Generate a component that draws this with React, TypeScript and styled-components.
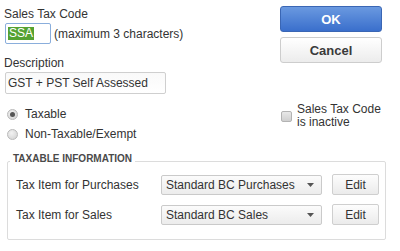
import styled, { createGlobalStyle } from "styled-components";

const GlobalStyle = createGlobalStyle`
  html, body {
    margin: 0;
    padding: 0;
    background: #ffffff;
  }
  body {
    font-family: "Liberation Sans", Arial, sans-serif;
    font-size: 12px;
    color: #333333;
  }
`;

const Dialog = styled.div`
  width: 400px;
  height: 251px;
  background: #ffffff;
  box-sizing: border-box;
  display: flex;
  flex-direction: column;
`;

const Top = styled.div`
  display: flex;
`;

const LeftColumn = styled.div`
  flex: 1;
  padding-left: 4px;
  display: flex;
  flex-direction: column;
`;

const RightColumn = styled.div`
  width: 102px;
  margin-right: 18px;
  padding-top: 6px;
  display: flex;
  flex-direction: column;
`;

const FieldLabel = styled.div<{ $top: number }>`
  margin-top: ${p => p.$top}px;
  line-height: 14px;
  font-size: 12px;
  color: #333;
`;

const CodeRow = styled.div`
  margin-top: 2px;
  display: flex;
  align-items: center;
  gap: 3px;
`;

const TextBox = styled.div<{ $width: number; $focused?: boolean }>`
  width: ${p => p.$width}px;
  height: ${p => (p.$focused ? 21 : 22)}px;
  box-sizing: border-box;
  margin-left: 1px;
  border: 1px solid ${p => (p.$focused ? "#8aaedc" : "#cfcfcf")};
  border-radius: 2px;
  background: ${p => (p.$focused ? "#ffffff" : "linear-gradient(#f9f9f9, #ffffff)")};
  display: flex;
  align-items: center;
  padding-left: 2px;
  font-size: 12px;
  color: #333;
  white-space: nowrap;
`;

const Selected = styled.span`
  background: #54a232;
  color: #ffffff;
  line-height: 13px;
  padding: 0 1px;
`;

const Hint = styled.span`
  font-size: 12px;
  color: #333;
`;

const RadioGroup = styled.div`
  margin-top: 10px;
  display: flex;
  flex-direction: column;
`;

const RadioRow = styled.div`
  height: 20px;
  display: flex;
  align-items: center;
  gap: 7px;
  padding-left: 3px;
`;

const RadioDot = styled.span<{ $checked?: boolean }>`
  width: 11px;
  height: 11px;
  box-sizing: border-box;
  border-radius: 50%;
  border: 1px solid #b9b9b9;
  background: radial-gradient(circle at 40% 35%, #f2f2f2, #cfcfcf);
  display: flex;
  align-items: center;
  justify-content: center;

  &::after {
    content: "";
    display: ${p => (p.$checked ? "block" : "none")};
    width: 5px;
    height: 5px;
    border-radius: 50%;
    background: #555;
  }
`;

const Button = styled.button<{ $primary?: boolean }>`
  width: 102px;
  height: 26px;
  box-sizing: border-box;
  border-radius: 3px;
  font-family: "Liberation Sans", Arial, sans-serif;
  font-size: 13px;
  font-weight: bold;
  padding: 0;
  cursor: pointer;
  border: 1px solid ${p => (p.$primary ? "#3a66b4" : "#cdcdcd")};
  color: ${p => (p.$primary ? "#ffffff" : "#3a3a3a")};
  background: ${p =>
    p.$primary
      ? "linear-gradient(#6a99e0, #3a6fcc)"
      : "linear-gradient(#ffffff, #ececec)"};
  & + & {
    margin-top: 5px;
  }
`;

const InactiveRow = styled.label`
  margin-top: 40px;
  display: flex;
  align-items: center;
  gap: 5px;
  padding-left: 1px;
`;

const Check = styled.span`
  width: 11px;
  height: 11px;
  box-sizing: border-box;
  border: 1px solid #b3b3b3;
  border-radius: 2px;
  background: linear-gradient(#e8e8e8, #cfcfcf);
  flex: none;
`;

const CheckText = styled.span`
  line-height: 13px;
  font-size: 12px;
  color: #333;
`;

const GroupBox = styled.fieldset`
  margin: 8px 14px 0 7px;
  padding: 0 0 14px 0;
  border: 1px solid #dcdcdc;
  border-radius: 2px;
  min-width: 0;
`;

const Legend = styled.legend`
  margin-left: 2px;
  padding: 0 3px 6px 3px;
  font-size: 10px;
  font-weight: bold;
  color: #4a4a4a;
  line-height: 13px;
`;

const ItemRow = styled.div`
  display: grid;
  grid-template-columns: 135px 161px 47px;
  column-gap: 10px;
  align-items: center;
  padding-left: 8px;
  margin-top: 9px;

  &:first-of-type {
    margin-top: 3px;
  }
`;

const ItemLabel = styled.span`
  font-size: 12px;
  color: #333;
  white-space: nowrap;
`;

const Select = styled.div`
  height: 20px;
  box-sizing: border-box;
  border: 1px solid #cacaca;
  border-radius: 2px;
  background: linear-gradient(#fbfbfb, #ececec);
  display: flex;
  align-items: center;
  padding: 0 7px 0 4px;
  font-size: 12px;
  color: #333;
`;

const SelectText = styled.span`
  flex: 1;
`;

const EditButton = styled.button`
  height: 21px;
  box-sizing: border-box;
  border: 1px solid #cfcfcf;
  border-radius: 2px;
  background: linear-gradient(#fdfdfd, #ebebeb);
  font-family: "Liberation Sans", Arial, sans-serif;
  font-size: 12px;
  color: #333;
  padding: 0;
`;

function Caret() {
  return (
    <svg width="7" height="4" viewBox="0 0 7 4">
      <path d="M0 0h7L3.5 4z" fill="#555" />
    </svg>
  );
}

const items = [
  { label: "Tax Item for Purchases", value: "Standard BC Purchases" },
  { label: "Tax Item for Sales", value: "Standard BC Sales" },
];

export default function App() {
  return (
    <>
      <GlobalStyle />
      <Dialog>
        <Top>
          <LeftColumn>
            <FieldLabel $top={7}>Sales Tax Code</FieldLabel>
            <CodeRow>
              <TextBox $width={46} $focused>
                <Selected>SSA</Selected>
              </TextBox>
              <Hint>(maximum 3 characters)</Hint>
            </CodeRow>
            <FieldLabel $top={12}>Description</FieldLabel>
            <CodeRow>
              <TextBox $width={161}>GST + PST Self Assessed</TextBox>
            </CodeRow>
            <RadioGroup>
              <RadioRow>
                <RadioDot $checked />
                Taxable
              </RadioRow>
              <RadioRow>
                <RadioDot />
                Non-Taxable/Exempt
              </RadioRow>
            </RadioGroup>
          </LeftColumn>
          <RightColumn>
            <Button $primary>OK</Button>
            <Button>Cancel</Button>
            <InactiveRow>
              <Check />
              <CheckText>
                Sales Tax Code
                <br />
                is inactive
              </CheckText>
            </InactiveRow>
          </RightColumn>
        </Top>
        <GroupBox>
          <Legend>TAXABLE INFORMATION</Legend>
          {items.map(item => (
            <ItemRow key={item.label}>
              <ItemLabel>{item.label}</ItemLabel>
              <Select>
                <SelectText>{item.value}</SelectText>
                <Caret />
              </Select>
              <EditButton>Edit</EditButton>
            </ItemRow>
          ))}
        </GroupBox>
      </Dialog>
    </>
  );
}
